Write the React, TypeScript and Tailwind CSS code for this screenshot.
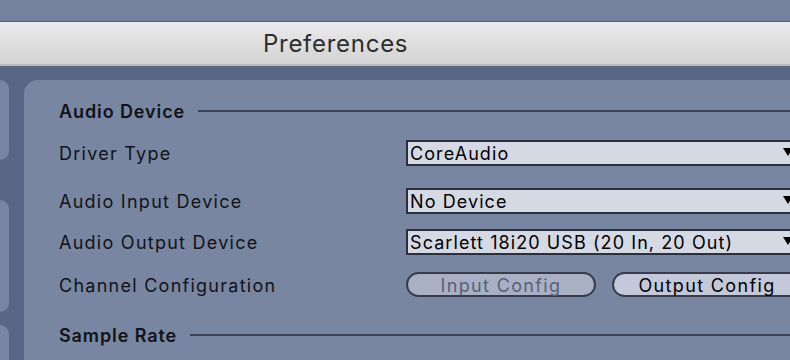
import { ReactNode } from 'react'

const font = { fontFamily: 'Inter, "Noto Sans", sans-serif' }

function SectionHeading({ title, className = '' }: { title: string; className?: string }) {
   return (
      <div className={`flex items-center h-[24px] ${className}`}>
         <span className="pt-[2px] text-[18px] font-semibold tracking-[0.05em] text-[#111318] leading-none">
            {title}
         </span>
         <div className="flex-1 h-[2px] bg-[#3c4357] ml-[13px]" />
      </div>
   )
}

function Label({ children }: { children: ReactNode }) {
   return (
      <div className="pt-[2px] text-[18px] tracking-[0.07em] text-[#111318] leading-none">
         {children}
      </div>
   )
}

function Chooser({ value }: { value: string }) {
   return (
      <div className="flex items-center justify-between w-[392px] h-[26px] border-2 border-[#2a2f3c] bg-[#d5d9e3] pl-[2px] pr-[3px]">
         <span className="pt-[2px] text-[18px] tracking-[0.06em] text-black leading-none">{value}</span>
         <svg width="10" height="8" viewBox="0 0 10 8" className="mt-[-3px]">
            <path d="M0 0 H10 L5 8 Z" fill="#000" />
         </svg>
      </div>
   )
}

function PillButton({ title, disabled = false }: { title: string; disabled?: boolean }) {
   return (
      <div
         className={`flex items-center justify-center shrink-0 w-[190px] h-[25px] pt-[2px] rounded-full border-2 border-[#363c4c] text-[18px] tracking-[0.075em] leading-none ${
            disabled ? 'bg-[#a9b0c4] text-[#58607a]' : 'bg-[#c3c9d8] text-black'
         }`}
      >
         {title}
      </div>
   )
}

export default function App() {
   return (
      <div className="w-[790px] h-[360px] overflow-hidden bg-[#74829e] flex flex-col" style={font}>
         <div className="h-[21px] shrink-0" />
         <div className="h-[45px] shrink-0 border-t border-[#56607a] border-b-2 border-b-[#bdbdbd] bg-gradient-to-b from-[#ebebeb] to-[#d3d3d3] flex items-center">
            <span className="pl-[263px] pt-[2px] text-[24px] tracking-[0.03em] text-[#2e2e2e] leading-none">
               Preferences
            </span>
         </div>
         <div className="flex-1 flex bg-[#5a6784] pt-[14px] min-h-0">
            <div className="w-[9px] shrink-0 flex flex-col">
               <div className="h-[80px] shrink-0 rounded-r-[12px] bg-[#7886a1]" />
               <div className="h-[112px] shrink-0 mt-[40px] rounded-r-[12px] bg-[#7886a1]" />
               <div className="h-[60px] shrink-0 mt-[13px] rounded-r-[12px] bg-[#7886a1]" />
            </div>
            <div className="flex-1 ml-[15px] rounded-tl-[14px] bg-[#7886a1] pl-[35px] overflow-hidden">
               <SectionHeading title="Audio Device" className="mt-[19px]" />
               <div className="grid grid-cols-[347px_1fr] items-center mt-[17px]">
                  <Label>Driver Type</Label>
                  <Chooser value="CoreAudio" />
               </div>
               <div className="grid grid-cols-[347px_1fr] items-center mt-[22px]">
                  <Label>Audio Input Device</Label>
                  <Chooser value="No Device" />
               </div>
               <div className="grid grid-cols-[347px_1fr] items-center mt-[15px]">
                  <Label>Audio Output Device</Label>
                  <Chooser value="Scarlett 18i20 USB (20 In, 20 Out)" />
               </div>
               <div className="grid grid-cols-[347px_1fr] items-center mt-[17px]">
                  <Label>Channel Configuration</Label>
                  <div className="flex gap-[16px]">
                     <PillButton title="Input Config" disabled />
                     <PillButton title="Output Config" />
                  </div>
               </div>
               <SectionHeading title="Sample Rate" className="mt-[26px]" />
            </div>
         </div>
      </div>
   )
}
